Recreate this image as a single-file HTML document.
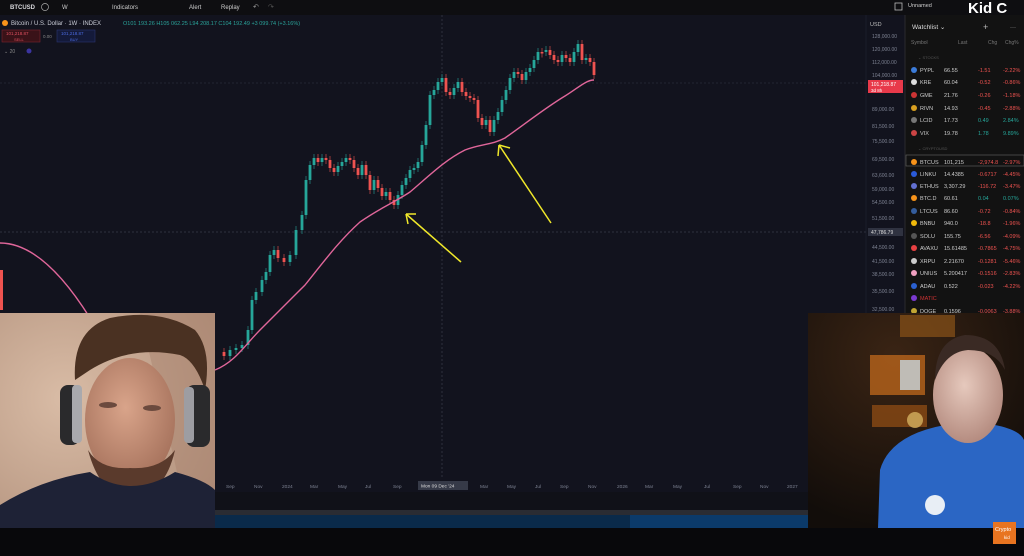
<!DOCTYPE html>
<html><head><meta charset="utf-8"><style>
*{margin:0;padding:0;box-sizing:border-box}
body{width:1024px;height:556px;overflow:hidden;background:#0b0b0f;font-family:"Liberation Sans",sans-serif;position:relative}
.t{position:absolute;font-size:6px;color:#8d93a3;white-space:nowrap}
</style></head><body>
<svg width="1024" height="556" style="position:absolute;left:0;top:0" xmlns="http://www.w3.org/2000/svg" font-family="Liberation Sans, sans-serif">
<defs>
<radialGradient id="lbg" cx="0.3" cy="0.4" r="0.8"><stop offset="0" stop-color="#d9bca6"/><stop offset="1" stop-color="#b2917c"/></radialGradient>
<radialGradient id="face" cx="0.45" cy="0.4" r="0.6"><stop offset="0" stop-color="#d9a48a"/><stop offset="1" stop-color="#a8745e"/></radialGradient>
<radialGradient id="rbg" cx="0.4" cy="0.2" r="0.8"><stop offset="0" stop-color="#3a2414"/><stop offset="1" stop-color="#120d0a"/></radialGradient>
<radialGradient id="face2" cx="0.45" cy="0.4" r="0.6"><stop offset="0" stop-color="#e6c9bd"/><stop offset="1" stop-color="#b58c80"/></radialGradient>
</defs>
<!-- top bar -->
<rect x="0" y="0" width="1024" height="15" fill="#0e0e11"/>
<text x="10" y="9" font-size="6" fill="#d8d8dc" font-weight="bold">BTCUSD</text>
<circle cx="45" cy="7" r="3.5" fill="none" stroke="#aaa" stroke-width="0.7"/>
<text x="62" y="9" font-size="6" fill="#ccc">W</text>
<text x="112" y="9" font-size="6" fill="#ccc">Indicators</text>
<text x="189" y="9" font-size="6" fill="#ccc">Alert</text>
<text x="221" y="9" font-size="6" fill="#ccc">Replay</text>
<text x="253" y="9" font-size="7" fill="#999">↶</text><text x="268" y="9" font-size="7" fill="#555">↷</text>
<rect x="895" y="3" width="7" height="7" fill="none" stroke="#bbb" stroke-width="0.8"/>
<text x="908" y="7" font-size="5.5" fill="#ccc">Unnamed</text>
<text x="968" y="13" font-size="15" fill="#fff" font-weight="bold">Kid C</text>
<!-- chart -->
<rect x="0" y="15" width="866" height="475" fill="#12131e"/>
<line x1="442" y1="15" x2="442" y2="490" stroke="#3a3d4a" stroke-dasharray="2,2" stroke-width="0.7"/>
<line x1="0" y1="232" x2="866" y2="232" stroke="#3a3d4a" stroke-dasharray="2,2" stroke-width="0.7"/>
<line x1="0" y1="83" x2="866" y2="83" stroke="#2a2d3a" stroke-dasharray="2,2" stroke-width="0.7"/>
<circle cx="5" cy="23" r="3" fill="#f7931a"/>
<text x="11" y="25" font-size="6" fill="#c9ccd6">Bitcoin / U.S. Dollar · 1W · INDEX</text>
<text x="123" y="25" font-size="5.5" fill="#2aa39a">O101 193.26 H105 062.25 L94 208.17 C104 192.49 +3 099.74 (+3.16%)</text>
<rect x="2" y="30" width="38" height="12" fill="#3a1218" stroke="#7a2330" stroke-width="0.6"/>
<text x="6" y="35" font-size="4.5" fill="#e05060">101,218.87</text><text x="14" y="41" font-size="4" fill="#e05060">SELL</text>
<text x="43" y="38" font-size="4.5" fill="#888">0.00</text>
<rect x="57" y="30" width="38" height="12" fill="#141a3a" stroke="#2a3570" stroke-width="0.6"/>
<text x="61" y="35" font-size="4.5" fill="#4a6ae0">101,218.87</text><text x="70" y="41" font-size="4" fill="#4a6ae0">BUY</text>
<text x="4" y="53" font-size="5" fill="#888">⌄ 20</text><circle cx="29" cy="51" r="2.5" fill="#3b34a0"/>
<g id="candles"></g>
<path d="M0,243 C30,243 60,270 90,318" stroke="#e0669a" stroke-width="1.4" fill="none"/>
<path d="M215,370 C235,362 245,345 260,330 C280,310 290,300 305,285 C325,260 340,240 360,222 C380,208 395,202 410,192 C430,175 445,160 465,150 C480,144 492,145 505,138 C525,124 545,108 565,96 C578,88 586,80 594,80" stroke="#e0669a" stroke-width="1.4" fill="none"/>
<g stroke="#f0e82a" stroke-width="1.5" fill="none">
<path d="M461,262 L406,214"/><path d="M406,214 L416,214 M406,214 L408,224"/>
<path d="M551,223 L499,145"/><path d="M499,145 L510,148 M499,145 L498,156"/>
</g>
<!-- price axis -->
<rect x="866" y="15" width="39" height="475" fill="#12131e"/>
<line x1="866" y1="15" x2="866" y2="490" stroke="#222533" stroke-width="0.6"/>
<text x="870" y="26" font-size="5.5" fill="#bbb">USD</text>
<g font-size="5" fill="#7d8292">
<text x="872" y="38">128,000.00</text><text x="872" y="51">120,000.00</text><text x="872" y="64">112,000.00</text><text x="872" y="77">104,000.00</text>
<text x="872" y="111">89,000.00</text><text x="872" y="128">81,500.00</text><text x="872" y="143">75,500.00</text><text x="872" y="161">69,500.00</text>
<text x="872" y="177">63,600.00</text><text x="872" y="191">59,000.00</text><text x="872" y="204">54,500.00</text><text x="872" y="220">51,500.00</text>
<text x="872" y="249">44,500.00</text><text x="872" y="263">41,500.00</text><text x="872" y="276">38,500.00</text><text x="872" y="293">35,500.00</text><text x="872" y="311">32,500.00</text>
</g>
<rect x="868" y="80" width="35" height="13" fill="#e8394a"/>
<text x="871" y="86" font-size="5" fill="#fff">101,218.87</text><text x="871" y="92" font-size="4.5" fill="#fff">3d 8h</text>
<rect x="868" y="228" width="35" height="8" fill="#2f3240"/>
<text x="871" y="234" font-size="5" fill="#ddd">47,786.79</text>
<!-- watchlist -->
<rect x="905" y="15" width="119" height="300" fill="#121212"/>
<line x1="905" y1="15" x2="905" y2="315" stroke="#2a2a2e" stroke-width="1"/>
<text x="912" y="29" font-size="6.5" fill="#ddd">Watchlist ⌄</text>
<text x="983" y="30" font-size="9" fill="#bbb">+</text>
<text x="1010" y="29" font-size="6" fill="#bbb">···</text>
<g font-size="5" fill="#777"><text x="911" y="44">Symbol</text><text x="958" y="44">Last</text><text x="988" y="44">Chg</text><text x="1005" y="44">Chg%</text></g>
<text x="918" y="59" font-size="4" fill="#555">⌄ STOCKS</text>
<text x="918" y="150" font-size="4" fill="#555">⌄ CRYPTOUSD</text>
<rect x="906" y="155" width="118" height="11" fill="none" stroke="#666" stroke-width="0.6"/>
<g id="wl" font-size="5.5"></g>
<!-- time axis -->
<rect x="215" y="478" width="593" height="14" fill="#12131e"/>
<g font-size="4.8" fill="#7d8292" id="ta"></g>
<rect x="418" y="481" width="50" height="9" fill="#363a48"/>
<text x="421" y="487.5" font-size="4.8" fill="#ddd">Mon 09 Dec '24</text>
<rect x="215" y="492" width="593" height="18" fill="#101118"/>
<rect x="215" y="510" width="593" height="5" fill="#2a2c33"/>
<rect x="215" y="515" width="593" height="13" fill="#0a2a4a"/>
<rect x="630" y="515" width="178" height="13" fill="#0b3a6a"/>
<rect x="0" y="528" width="1024" height="28" fill="#08080b"/>
<!-- left cam -->
<rect x="0" y="313" width="215" height="215" fill="url(#lbg)"/>
<path d="M140,313 L215,313 L215,528 L190,528 Z" fill="#a98470" opacity="0.5"/>
<ellipse cx="130" cy="420" rx="45" ry="62" fill="url(#face)"/>
<path d="M88,450 Q100,495 130,500 Q165,495 175,450 Q160,470 130,468 Q100,470 88,450Z" fill="#5a3a2c"/>
<path d="M75,380 Q72,330 110,318 Q160,308 195,330 Q212,350 205,390 Q195,360 180,355 Q130,345 90,370 Z" fill="#4a3122"/>
<rect x="60" y="385" width="20" height="60" rx="8" fill="#2a2a2c"/><rect x="72" y="385" width="10" height="58" rx="4" fill="#a9a9ad"/>
<rect x="186" y="385" width="24" height="62" rx="8" fill="#2a2a2c"/><rect x="184" y="387" width="10" height="56" rx="4" fill="#9d9da2"/>
<path d="M0,528 L0,505 Q40,480 90,472 Q130,500 175,472 Q205,480 215,490 L215,528Z" fill="#1e2236"/>
<ellipse cx="108" cy="405" rx="9" ry="3" fill="#6b4a3e"/><ellipse cx="152" cy="408" rx="9" ry="3" fill="#6b4a3e"/>
<!-- right cam -->
<rect x="808" y="313" width="216" height="215" fill="url(#rbg)"/>
<rect x="870" y="355" width="55" height="40" fill="#b8641c" opacity="0.8"/>
<rect x="900" y="360" width="20" height="30" fill="#bfbcb6"/>
<rect x="872" y="405" width="55" height="22" fill="#8a4a14" opacity="0.8"/>
<circle cx="915" cy="420" r="8" fill="#d4b060" opacity="0.8"/>
<rect x="900" y="315" width="55" height="22" fill="#8a5218" opacity="0.7"/>
<path d="M878,528 L880,470 Q890,435 945,425 Q970,450 995,425 Q1020,430 1024,440 L1024,528Z" fill="#2b66c4"/>
<ellipse cx="968" cy="395" rx="35" ry="48" fill="url(#face2)"/>
<path d="M935,380 Q935,340 965,335 Q1000,335 1005,370 Q995,350 968,350 Q945,352 935,380Z" fill="#3a2a24"/>
<circle cx="935" cy="505" r="10" fill="#e8eef5"/>
<rect x="993" y="522" width="23" height="22" fill="#e87420"/>
<text x="995" y="531" font-size="5.5" fill="#fff">Crypto</text><text x="1004" y="539" font-size="4.5" fill="#fff">kid</text>
</svg>
<script>
var k=[[218,352],[224,356],[230,350],[236,348],[242,345],[248,330],[252,300],[256,292],[262,280],[266,272],[270,255],[274,250],[278,258],[284,262],[290,255],[296,230],[302,215],[306,180],[310,165],[314,158],[318,162],[322,158],[326,160],[330,168],[334,172],[338,166],[342,162],[346,158],[350,160],[354,168],[358,175],[362,165],[366,175],[370,190],[374,180],[378,188],[382,196],[386,192],[390,200],[394,205],[398,195],[402,185],[406,178],[410,170],[414,168],[418,162],[422,145],[426,125],[430,95],[434,90],[438,82],[442,78],[446,92],[450,95],[454,88],[458,82],[462,92],[466,96],[470,98],[474,100],[478,118],[482,125],[486,120],[490,132],[494,120],[498,112],[502,100],[506,90],[510,78],[514,72],[518,74],[522,80],[526,72],[530,68],[534,60],[538,52],[542,52],[546,50],[550,55],[554,60],[558,62],[562,55],[566,58],[570,62],[574,52],[578,44],[582,60],[586,58],[590,62],[594,75]];
var g=document.getElementById('candles'),s='';
for(var i=1;i<k.length;i++){var x=k[i][0],o=k[i-1][1],c=k[i][1];var up=c<o;var col=up?'#26a69a':'#ef5350';var t=Math.min(o,c),h=Math.max(Math.abs(o-c),1.5);
s+='<line x1="'+x+'" y1="'+(t-4)+'" x2="'+x+'" y2="'+(t+h+4)+'" stroke="'+col+'" stroke-width="0.6"/><rect x="'+(x-1.4)+'" y="'+t+'" width="2.8" height="'+h+'" fill="'+col+'"/>';}
s+='<rect x="0" y="270" width="3" height="40" fill="#ef5350"/>';
g.innerHTML=s;
var w=[["PYPL","66.55","-1.51","-2.22%",70,0,"#3b7bd8"],["KRE","60.04","-0.52","-0.86%",82,0,"#ddd"],["GME","21.76","-0.26","-1.18%",95,0,"#c33"],["RIVN","14.93","-0.45","-2.88%",108,0,"#d8a020"],["LCID","17.73","0.49","2.84%",120,1,"#777"],["VIX","19.78","1.78","9.89%",133,1,"#c44"],
["BTCUS","101,215","-2,974.8","-2.97%",162,0,"#f7931a"],["LINKU","14.4385","-0.6717","-4.45%",174,0,"#2a5ad8"],["ETHUS","3,307.29","-116.72","-3.47%",186,0,"#6270d0"],["BTC.D","60.61","0.04","0.07%",198,1,"#f7931a"],["LTCUS","86.60","-0.72","-0.84%",211,0,"#345d9d"],["BNBU","940.0","-18.8","-1.96%",223,0,"#f0b90b"],["SOLU","155.75","-6.56","-4.09%",236,0,"#555"],["AVAXU","15.61485","-0.7865","-4.75%",248,0,"#e84142"],["XRPU","2.21670","-0.1281","-5.46%",261,0,"#ccc"],["UNIUS","5.200417","-0.1516","-2.83%",273,0,"#f0a0c0"],["ADAU","0.522","-0.023","-4.22%",286,0,"#2a60d0"],["MATIC","","","",298,0,"#7a3ad0"],["DOGE","0.1596","-0.0063","-3.88%",311,0,"#c2a633"]];
var h='';w.forEach(function(r){var y=r[4]+2,cc=r[5]?'#26a69a':'#ef5350';
h+='<circle cx="914" cy="'+(y-2)+'" r="3" fill="'+r[6]+'"/><text x="920" y="'+y+'" fill="'+(r[0]=="MATIC"?'#c33':'#ccc')+'">'+r[0]+'</text><text x="944" y="'+y+'" fill="#ccc">'+r[1]+'</text><text x="978" y="'+y+'" fill="'+cc+'">'+r[2]+'</text><text x="1003" y="'+y+'" fill="'+cc+'">'+r[3]+'</text>';});
document.getElementById('wl').innerHTML=h;
var ta=[["Sep",226],["Nov",254],["2024",282],["Mar",310],["May",338],["Jul",365],["Sep",393],["Mar",480],["May",507],["Jul",535],["Sep",560],["Nov",588],["2026",617],["Mar",645],["May",673],["Jul",704],["Sep",733],["Nov",760],["2027",787]];
var t='';ta.forEach(function(a){t+='<text x="'+a[1]+'" y="488">'+a[0]+'</text>';});document.getElementById('ta').innerHTML=t;
</script>
</body></html>
